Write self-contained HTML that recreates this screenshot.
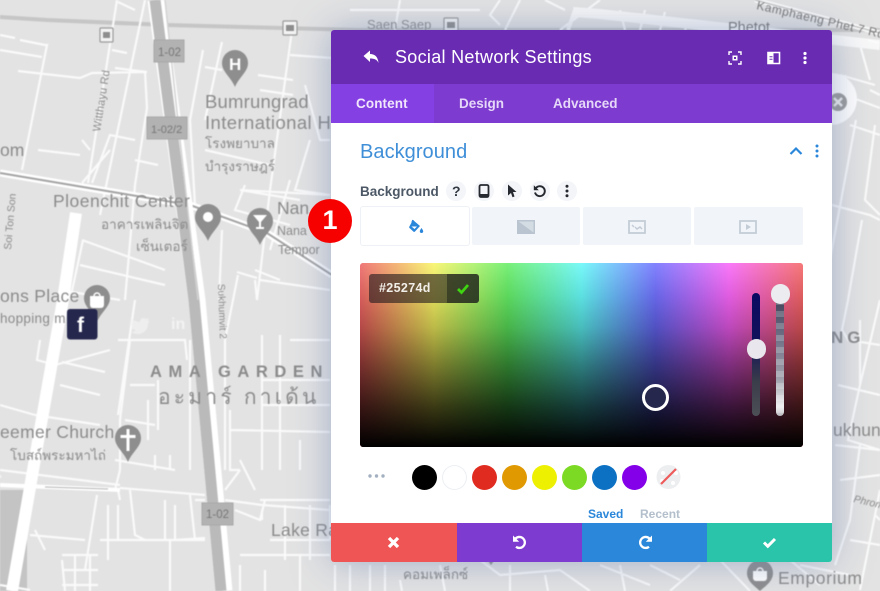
<!DOCTYPE html>
<html><head><meta charset="utf-8"><style>
html,body{margin:0;padding:0;width:880px;height:591px;overflow:hidden;background:#e3e3e3;font-family:"Liberation Sans","Noto Sans CJK SC",sans-serif}
*{box-sizing:border-box}
.abs{position:absolute}
#map{position:absolute;left:0;top:0;filter:blur(.5px)}
#map text{font-family:"Liberation Sans","Noto Sans CJK SC",sans-serif;fill:#8b8b8b}
#modal{position:absolute;left:331px;top:30px;width:501px;height:532px;background:#fff;border-radius:3px;overflow:hidden;box-shadow:0 0 38px rgba(105,130,175,.55)}
.t{position:absolute;white-space:nowrap}
.tab{position:absolute;top:207px;height:38px;width:108px;background:#f1f5f9;border-radius:2px}
.sw{position:absolute;top:464.5px;width:25px;height:25px;border-radius:50%}
.ic{position:absolute;top:181px;width:20px;height:20px;border-radius:50%;background:#f3f5f8}
</style></head><body>
<svg id="map" width="880" height="591" viewBox="0 0 880 591" xmlns="http://www.w3.org/2000/svg">
<rect width="880" height="591" fill="#e3e3e3"/>
<rect x="0" y="490" width="27" height="101" fill="#c4c4c4"/>
<path d="M0 17L47 20L167 25L360 30L880 30" fill="none" stroke="#c6c6c6" stroke-width="4"/>
<g fill="none" stroke="#fafafa" stroke-width="2.2">
<path d="M117 0L88 183M20 40L45 45L47 45L22 170M0 50L42 57M18 71L80 78L92 73L145 72L147 108L135 185M115 68L147 72M112 50L127 53M118 2L135 10M0 35L15 38"/>
<path d="M38 150L80 155M92 183L110 135L135 140M135 160L158 165M82 140L90 150M110 150L82 183"/>
<path d="M203 50L190 120L195 205M222 42L205 120M205 67L222 70M258 75L293 80M260 90L293 95M292 30L270 190L257 300M290 55L332 58M305 85L320 140L330 140M310 140L295 190L330 195M240 190L330 195M205 150L270 165M245 185L235 210L290 225M290 180L270 250M240 190L300 200"/>
<path d="M83 240L70 300M82 240L165 270M80 265L165 285M60 290L120 300M255 270L280 280M255 280L257 300M260 280L330 290M237 272L257 278M222 230L219 300M238 275L225 340"/>
<path d="M145 0L100 215M135 185L125 300M135 300L118 415M118 340L185 340L187 360M40 340L37 360L55 365L110 350M62 362L105 372M60 385L100 395M0 405L35 415M35 415L100 425M130 340L120 420L120 470M120 470L115 490M130 385L155 385M148 400L148 440M158 380L158 430M125 420L155 425M190 340L190 470M225 340L225 470M230 410L230 470L240 470M230 430L330 432M240 460L255 490M225 490L240 470M290 340L330 340M262 335L262 470M280 335L280 470M300 440L300 470M260 500L330 500M262 405L330 405M262 380L330 380M270 540L330 540M280 340L280 405"/>
<path d="M0 475L0 478M0 470L120 485M120 488L205 495M225 500L262 505L330 510M115 460L175 470M155 455L155 470M170 455L170 470M118 490L120 500M0 585L30 590M35 530L45 550M97 495L85 570M108 505L108 560M118 505L118 540M130 490L135 535L145 540M165 500L165 540M175 505L175 540L205 538M190 495L195 540M195 500L205 500M30 535L85 540M100 540L205 540M170 540L170 591M90 555L90 591M62 555L98 555M62 570L98 570M62 585L98 585M62 560L65 591M75 555L75 591M262 510L262 520M235 510L260 520L265 500M285 505L285 560M310 505L310 560M330 505L330 540M240 555L330 555M240 591L240 565M265 570L265 591M300 555L300 591"/>
<path d="M350 10L480 10M400 0L395 30M500 0L490 15L500 25M520 0L505 30M545 0L565 10M600 0L560 30M620 10L625 30M645 10L640 30M665 12L660 30M690 20L685 30M840 75L875 85M845 95L880 108M850 125L880 135M860 45L870 80M845 75L850 100M870 90L880 95"/>
<path d="M856 120L830 260M875 125L865 200L880 215M832 205L870 215L880 220M862 220L848 300L842 330L848 340L880 345M838 385L880 395M880 300L860 385L848 440L880 450M835 445L880 450M860 320L860 385M840 480L880 475M860 445L850 520L835 565M880 490L860 590M875 515L880 520M850 540L880 545"/>
<path d="M400 580L402 591M440 565L445 591M480 560L500 575L560 570L590 591M510 565L510 591M545 575L548 591M600 565L650 585M650 565L680 580M620 565L625 591M700 565L670 591M720 560L750 591M790 560L820 585M800 565L850 575M335 565L335 591M350 565L350 591M370 565L370 591M385 565L385 591"/>
</g>
<path d="M573 12L600 14L880 45" fill="none" stroke="#f8f8f8" stroke-width="10"/>
<path d="M575 10L568 30" fill="none" stroke="#f8f8f8" stroke-width="4"/>
<path d="M755 0L880 33" fill="none" stroke="#fafafa" stroke-width="5"/>
<path d="M755 0L880 33" fill="none" stroke="#bdbdbd" stroke-width="1.2"/>
<path d="M76 213L63 300L40 430L12 591" fill="none" stroke="#fff" stroke-width="12"/>
<path d="M0 485L120 490" fill="none" stroke="#fff" stroke-width="4"/>
<path d="M45 487L108 489" fill="none" stroke="#b4b4b4" stroke-width="1"/>
<path d="M0 173L83 187L190 205L267 233L332 275" fill="none" stroke="#fff" stroke-width="7"/>
<path d="M0 173L83 187L190 205L267 233L332 275" fill="none" stroke="#a4a4a4" stroke-width="2"/>
<path d="M156 0L197 300L224 591" fill="none" stroke="#fff" stroke-width="17"/>
<path d="M155 0L194 300L221 591" fill="none" stroke="#bababa" stroke-width="11"/>
<path d="M165 0L180 140L198 300" fill="none" stroke="#d3d3d3" stroke-width="1.5"/>
<rect x="154" y="40" width="30" height="22" fill="#b2b2b2" stroke="#a8a8a8"/>
<text x="158" y="56" font-size="11.5" style="fill:#777">1-02</text>
<rect x="147" y="117" width="40" height="22" fill="#b2b2b2" stroke="#a8a8a8"/>
<text x="151" y="133" font-size="11" style="fill:#777">1-02/2</text>
<rect x="202" y="503" width="31" height="22" fill="#b2b2b2" stroke="#a8a8a8"/>
<text x="206" y="518" font-size="11.5" style="fill:#777">1-02</text>
<g fill="#8e8e8e">
<path d="M235 50a13 13 0 0 1 13 13c0 9-9 14-13 24c-4-10-13-15-13-24a13 13 0 0 1 13-13z"/>
<path d="M208 204a13 13 0 0 1 13 13c0 9-9 14-13 24c-4-10-13-15-13-24a13 13 0 0 1 13-13z"/>
<path d="M260 208a13 13 0 0 1 13 13c0 9-9 14-13 24c-4-10-13-15-13-24a13 13 0 0 1 13-13z"/>
<path d="M128 425a13 13 0 0 1 13 13c0 9-9 14-13 24c-4-10-13-15-13-24a13 13 0 0 1 13-13z"/>
<path d="M97 285a13 13 0 0 1 13 13c0 9-9 14-13 24c-4-10-13-15-13-24a13 13 0 0 1 13-13z"/>
<path d="M760 560a13 13 0 0 1 13 13c0 9-9 14-13 18c-4-4-13-9-13-18a13 13 0 0 1 13-13z"/>
<path d="M484 555h14l-7 10z"/>
</g>
<text x="229" y="70" font-size="17" font-weight="bold" style="fill:#fff">H</text>
<circle cx="208" cy="217" r="5" fill="#fff"/>
<path d="M253 215h14l-6 7v5h3v2h-8v-2h3v-5z" fill="#fff"/>
<path d="M126.500 429h3v6h6v3h-6v13h-3v-13h-6v-3h6z" fill="#fff"/>
<path d="M90 296h14v9a3 3 0 0 1-3 3h-8a3 3 0 0 1-3-3z" fill="#fff"/><path d="M94 296a3 3 0 0 1 6 0" fill="none" stroke="#fff" stroke-width="1.500"/>
<path d="M753 571h14v7a3 3 0 0 1-3 3h-8a3 3 0 0 1-3-3z" fill="#fff"/><path d="M757 571a3 3 0 0 1 6 0" fill="none" stroke="#fff" stroke-width="1.500"/>
<g fill="#f4f4f4" stroke="#9a9a9a" stroke-width="1.200">
<rect x="100" y="28" width="13" height="14" rx="1"/><rect x="283" y="21" width="14" height="14" rx="1"/><rect x="444" y="18" width="14" height="13" rx="1"/>
</g>
<g fill="#8e8e8e"><rect x="103" y="32" width="7" height="6"/><rect x="286" y="25" width="8" height="6"/><rect x="447" y="22" width="8" height="6"/></g>
<text x="205" y="108" font-size="18.500" letter-spacing=".2">Bumrungrad</text>
<text x="205" y="129" font-size="18.500" letter-spacing=".4">International H</text>
<text x="205" y="148" font-size="13.500">โรงพยาบาล</text>
<text x="205" y="171" font-size="13.500">บำรุงราษฎร์</text>
<text x="0" y="156" font-size="17.500">om</text>
<text x="53" y="207" font-size="17.500" letter-spacing=".5">Ploenchit Center</text>
<text x="101" y="229" font-size="13.500">อาคารเพลินจิต</text>
<text x="136" y="251" font-size="13.500">เซ็นเตอร์</text>
<text x="277" y="214" font-size="17.500">Nan</text>
<text x="277" y="235" font-size="12.500">Nana</text>
<text x="278" y="254" font-size="12.500">Tempor</text>
<text x="0" y="302" font-size="17.500" letter-spacing=".3">ons Place</text>
<text x="0" y="323" font-size="13.500" letter-spacing=".3">hopping m</text>
<text font-size="11" transform="translate(100 132) rotate(-81)" letter-spacing=".2">Witthayu Rd</text>
<text font-size="10.500" transform="translate(11 250) rotate(-85)">Soi Ton Son</text>
<text font-size="10" transform="translate(218 284) rotate(88)">Sukhumvit 2</text>
<text x="150" y="377" font-size="16.500" font-weight="bold" letter-spacing="6.6">AMA GARDEN</text>
<text x="158" y="404" font-size="21" letter-spacing="3.200">อะมาร์ กาเด้น</text>
<text x="0" y="438" font-size="17.500" letter-spacing=".3">eemer Church</text>
<text x="10" y="460" font-size="13.500">โบสถ์พระมหาไถ่</text>
<text x="271" y="536" font-size="17.500" letter-spacing=".3">Lake Ra</text>
<text x="403" y="579" font-size="13.500">คอมเพล็กซ์</text>
<text x="778" y="584" font-size="17.500" letter-spacing=".6">Emporium</text>
<text x="831" y="343" font-size="17" font-weight="bold" letter-spacing="4">NG</text>
<text x="833" y="436" font-size="17.500">ukhun</text>
<text font-size="10.500" font-style="italic" transform="translate(853 502) rotate(13)">Phrom</text>
<text font-size="12" letter-spacing=".5" transform="translate(756 9) rotate(13)" style="fill:#777">Kamphaeng Phet 7 Rd</text>
<text x="367" y="29" font-size="13" style="fill:#8f8f8f">Saen Saep</text>
<text x="728" y="32" font-size="14.500" style="fill:#777">Phetot</text>
<circle cx="831" cy="99" r="26" fill="#fdfdfd"/>
<circle cx="838" cy="102" r="9" fill="#9a9a9a"/>
<path d="M834 98l8 8M842 98l-8 8" stroke="#eee" stroke-width="2.500"/>
<path d="M868 40l10 3M840 120h4" stroke="#fff" stroke-width="1"/>
<rect x="67" y="309" width="30.500" height="30.500" rx="3" fill="#25274d"/>
<text x="77" y="332" font-size="21" font-weight="bold" style="fill:#fff">f</text>
<path d="M132 319c3 2 6 3 8 3c0-4 4-5 6-3l3-1l-1 3l2 0c-1 1-2 2-2 3c0 6-5 10-10 10c-3 0-5-1-7-2c2 0 4-1 5-2c-3 0-4-2-5-3h2c-2-1-3-3-3-5l2 1c-2-2-2-3-1-4z" fill="#f2f2f2" opacity=".75"/>
<text x="171" y="329" font-size="16" font-weight="bold" style="fill:#f6f6f6;opacity:.85">in</text>
</svg>

<div id="modal">
 <div class="abs" style="left:0;top:0;width:501px;height:54px;background:#6a2bb3"></div>
 <div class="abs" style="left:0;top:54px;width:501px;height:39px;background:#7d3bcf"></div>
 <div class="abs" style="left:0;top:54px;width:103px;height:39px;background:#8440e2"></div>
 <svg class="abs" style="left:31px;top:18px" width="18" height="18" viewBox="0 0 18 18"><path d="M1.500 8L8 2.500V6c5 0 8 3 8.500 9C15 11.500 12.500 10.500 8 10.500v3.500z" fill="#fff"/></svg>
 <div class="t" style="left:64px;top:17px;font-size:18px;color:#fff;letter-spacing:.3px;line-height:21px">Social Network Settings</div>
 <svg class="abs" style="left:397px;top:21px" width="14" height="14" viewBox="0 0 14 14" fill="none" stroke="#fff" stroke-width="1.400"><path d="M1 4V1h3M10 1h3v3M13 10v3h-3M4 13H1v-3"/><rect x="4.500" y="4.500" width="5" height="5" fill="#fff" stroke="none"/><rect x="6" y="6" width="2" height="2" fill="#6a2bb3" stroke="none"/></svg>
 <svg class="abs" style="left:436px;top:21px" width="14" height="14" viewBox="0 0 14 14"><path d="M1 1.500h11.500v11H1z" fill="none" stroke="#fff" stroke-width="1.600"/><path d="M1 1.500h5.500v11H1z" fill="#fff"/><path d="M2.500 5.800h3M2.500 8.200h3" stroke="#6a2bb3" stroke-width="1"/></svg>
 <svg class="abs" style="left:471px;top:21px" width="6" height="14" viewBox="0 0 6 14" fill="#fff"><circle cx="3" cy="2.500" r="1.600"/><circle cx="3" cy="7" r="1.600"/><circle cx="3" cy="11.500" r="1.600"/></svg>
 <div class="t" style="left:25px;top:65px;font-size:13.500px;font-weight:bold;color:#f1e6fc;letter-spacing:.1px;line-height:17px">Content</div>
 <div class="t" style="left:128px;top:65px;font-size:13.500px;font-weight:bold;color:#e6d8f8;letter-spacing:0;line-height:17px">Design</div>
 <div class="t" style="left:222px;top:65px;font-size:13.500px;font-weight:bold;color:#e6d8f8;letter-spacing:0;line-height:17px">Advanced</div>
 <div class="t" style="left:29px;top:108px;font-size:20px;color:#3f8fd8;letter-spacing:.05px;line-height:28px">Background</div>
 <svg class="abs" style="left:458px;top:115px" width="14" height="12" viewBox="0 0 14 12"><path d="M1.500 9L7 3.500L12.500 9" fill="none" stroke="#2b87da" stroke-width="2.200"/></svg>
 <svg class="abs" style="left:483px;top:114px" width="6" height="14" viewBox="0 0 6 14" fill="#2b87da"><circle cx="3" cy="2" r="1.500"/><circle cx="3" cy="7" r="1.500"/><circle cx="3" cy="12" r="1.500"/></svg>
 <div class="t" style="left:29px;top:153px;font-size:13.500px;font-weight:bold;color:#4c5866;letter-spacing:0;line-height:17px">Background</div>
</div>

<div style="position:absolute;left:0;top:0">
 <div class="ic" style="left:446px"></div><div class="ic" style="left:474px"></div><div class="ic" style="left:502px"></div><div class="ic" style="left:530px"></div><div class="ic" style="left:557px"></div>
 <div class="t" style="left:452px;top:182px;font-size:14px;font-weight:bold;color:#333a44;line-height:18px">?</div>
 <svg class="abs" style="left:478px;top:184px" width="12" height="14" viewBox="0 0 12 14"><rect x="1.500" y="1" width="9" height="12" rx="1.500" fill="none" stroke="#26292f" stroke-width="1.800"/><rect x="1.500" y="10" width="9" height="3" fill="#26292f"/></svg>
 <svg class="abs" style="left:506px;top:184px" width="12" height="14" viewBox="0 0 12 14"><path d="M2 0.500L10.500 8H7l1.500 4.500-2 .8L5 9l-3 2.500z" fill="#26292f"/></svg>
 <svg class="abs" style="left:532px;top:184px" width="15" height="14" viewBox="0 0 15 14"><path d="M3.800 4.200A5 5 0 1 1 3 8.500" fill="none" stroke="#26292f" stroke-width="1.900"/><path d="M1.800 1.200v5h5z" fill="#26292f"/></svg>
 <svg class="abs" style="left:564px;top:184px" width="6" height="14" viewBox="0 0 6 14" fill="#26292f"><circle cx="3" cy="2.200" r="1.500"/><circle cx="3" cy="7" r="1.500"/><circle cx="3" cy="11.800" r="1.500"/></svg>

 <div class="tab" style="left:361px;background:#fff;box-shadow:0 0 0 1px #eef1f5"></div>
 <div class="tab" style="left:472px"></div><div class="tab" style="left:583px"></div><div class="tab" style="left:694px;width:109px"></div>
 <svg class="abs" style="left:408px;top:219px" width="16" height="15" viewBox="0 0 16 15"><path d="M5 1l7 6-5 5.500a1.200 1.200 0 0 1-1.700 0L1.500 9a1.200 1.200 0 0 1 0-1.700z" fill="#2b87da"/><path d="M4 3.500l1-2.500" stroke="#2b87da" stroke-width="1.500"/><path d="M3.500 7.500h5.500L6.500 10z" fill="#fff"/><path d="M13.500 9c1 1.500 1.700 2.300 1.700 3.300a1.700 1.700 0 0 1-3.400 0c0-1 .7-1.800 1.700-3.300z" fill="#2b87da"/></svg>
 <svg class="abs" style="left:517px;top:220px" width="18" height="14" viewBox="0 0 18 14"><rect width="18" height="14" fill="#b9c4d0"/><path d="M1.500 1.500H16.500V12.500z" fill="#d3dbe3"/></svg>
 <svg class="abs" style="left:628px;top:220px" width="18" height="14" viewBox="0 0 18 14" fill="none"><rect x="1" y="1" width="16" height="12" stroke="#c3ccd6" stroke-width="1.800"/><path d="M4 5l2 2M7 7l2 2 3-2 2 2" stroke="#c3ccd6" stroke-width="1.500"/></svg>
 <svg class="abs" style="left:739px;top:220px" width="18" height="14" viewBox="0 0 18 14" fill="none"><rect x="1" y="1" width="16" height="12" stroke="#c3ccd6" stroke-width="1.800"/><path d="M7 4l5 3-5 3z" fill="#c3ccd6"/></svg>

 <div class="abs" style="left:360px;top:263px;width:443px;height:184px;border-radius:3px;overflow:hidden;background:linear-gradient(to right,#e62020 0%,#f5f020 16.700%,#20e620 33.300%,#20f5f5 50%,#3030ff 66.700%,#f520f5 83.300%,#f02020 100%)">
  <div class="abs" style="inset:0;background:linear-gradient(to bottom,rgba(255,255,255,.4) 0%,rgba(190,190,190,.38) 18%,rgba(120,120,120,.45) 35%,rgba(55,55,55,.62) 55%,rgba(18,18,18,.82) 78%,#000 100%)"></div>
 </div>
 <div class="abs" style="left:369px;top:274px;width:110px;height:29px;border-radius:3px;background:rgba(35,28,30,.62)"></div>
 <div class="abs" style="left:447px;top:274px;width:32px;height:29px;border-radius:0 3px 3px 0;background:rgba(15,25,20,.45)"></div>
 <div class="t" style="left:379px;top:281px;font-size:12.500px;font-weight:bold;color:#f2eee8;letter-spacing:.35px;line-height:15px">#25274d</div>
 <svg class="abs" style="left:456px;top:282px" width="14" height="13" viewBox="0 0 14 13"><path d="M2 7l3.500 3.500L12 3" fill="none" stroke="#3fd411" stroke-width="2.800"/></svg>
 <div class="abs" style="left:752px;top:293px;width:8px;height:123px;border-radius:4px;background:linear-gradient(to bottom,#0a0a62 0%,#12125a 40%,#3a3d4a 72%,#4d4f56 100%)"></div>
 <div class="abs" style="left:776px;top:293px;width:8px;height:123px;border-radius:4px;background:repeating-linear-gradient(to bottom,rgba(255,255,255,0) 0 6px,rgba(255,255,255,.2) 6px 12px),linear-gradient(to bottom,#3b3d54 0%,#6e6f85 35%,#a0a0ac 70%,#f0f0f2 92%,#b8b8bc 100%)"></div>
 <div class="abs" style="left:746.500px;top:339px;width:19.500px;height:19.500px;border-radius:50%;background:#e9e7ed"></div>
 <div class="abs" style="left:770.500px;top:284px;width:19.500px;height:19.500px;border-radius:50%;background:#ecebef"></div>
 <div class="abs" style="left:642px;top:384px;width:27px;height:27px;border-radius:50%;border:3.500px solid #fff;background:#25274d"></div>

 <svg class="abs" style="left:367px;top:473px" width="20" height="6" viewBox="0 0 20 6" fill="#a3b0c2"><circle cx="3" cy="3" r="1.700"/><circle cx="9.500" cy="3" r="1.700"/><circle cx="16" cy="3" r="1.700"/></svg>
 <div class="sw" style="left:412px;background:#000"></div>
 <div class="sw" style="left:442px;background:#fff;box-shadow:inset 0 0 0 1px #eceff3"></div>
 <div class="sw" style="left:472px;background:#e02b20"></div>
 <div class="sw" style="left:502px;background:#e09900"></div>
 <div class="sw" style="left:532px;background:#edf000"></div>
 <div class="sw" style="left:562px;background:#7cda24"></div>
 <div class="sw" style="left:592px;background:#0c71c3"></div>
 <div class="sw" style="left:622px;background:#8300e9"></div>
 <svg class="abs" style="left:656px;top:464px" width="25" height="26" viewBox="0 0 25 26"><circle cx="12.500" cy="13" r="12" fill="#eceef0"/><circle cx="7" cy="9" r="2" fill="#fff"/><circle cx="17" cy="19" r="2" fill="#fff"/><circle cx="6" cy="17" r="2" fill="#fff"/><circle cx="20" cy="9" r="2" fill="#fff"/><path d="M5 20L20 5" stroke="#ef5b5b" stroke-width="2.200"/></svg>
 <div class="t" style="left:588px;top:507px;font-size:12px;font-weight:bold;color:#2b87da;line-height:15px">Saved</div>
 <div class="t" style="left:640px;top:507px;font-size:12px;font-weight:bold;color:#b4bfcc;line-height:15px">Recent</div>

 <div class="abs" style="left:331px;top:523px;width:126px;height:39px;background:#ef5555;border-radius:0 0 0 3px"></div>
 <div class="abs" style="left:457px;top:523px;width:125px;height:39px;background:#7d3bcf"></div>
 <div class="abs" style="left:582px;top:523px;width:125px;height:39px;background:#2b87da"></div>
 <div class="abs" style="left:707px;top:523px;width:125px;height:39px;background:#29c4a9;border-radius:0 0 3px 0"></div>
 <svg class="abs" style="left:387px;top:536px" width="13" height="13" viewBox="0 0 13 13"><path d="M2 2l9 9M11 2l-9 9" stroke="#fff" stroke-width="3.300"/></svg>
 <svg class="abs" style="left:511px;top:534px" width="17" height="16" viewBox="0 0 17 16"><path d="M4.500 4.500A5.500 5.500 0 1 1 5 12.800" fill="none" stroke="#fff" stroke-width="2.300"/><path d="M2 1.500v6.200h6.200z" fill="#fff"/></svg>
 <svg class="abs" style="left:637px;top:534px" width="17" height="16" viewBox="0 0 17 16"><path d="M12.500 4.500A5.500 5.500 0 1 0 12 12.800" fill="none" stroke="#fff" stroke-width="2.300"/><path d="M15 1.500v6.200H8.800z" fill="#fff"/></svg>
 <svg class="abs" style="left:762px;top:536px" width="15" height="13" viewBox="0 0 15 13"><path d="M2 6.500l3.800 3.800L13 3" fill="none" stroke="#fff" stroke-width="3"/></svg>

 <div class="abs" style="left:308px;top:199px;width:44px;height:44px;border-radius:50%;background:#f70000"></div>
 <div class="t" style="left:308px;top:205px;width:44px;text-align:center;font-size:27px;font-weight:bold;color:#fff;line-height:31px">1</div>
</div>
</body></html>
